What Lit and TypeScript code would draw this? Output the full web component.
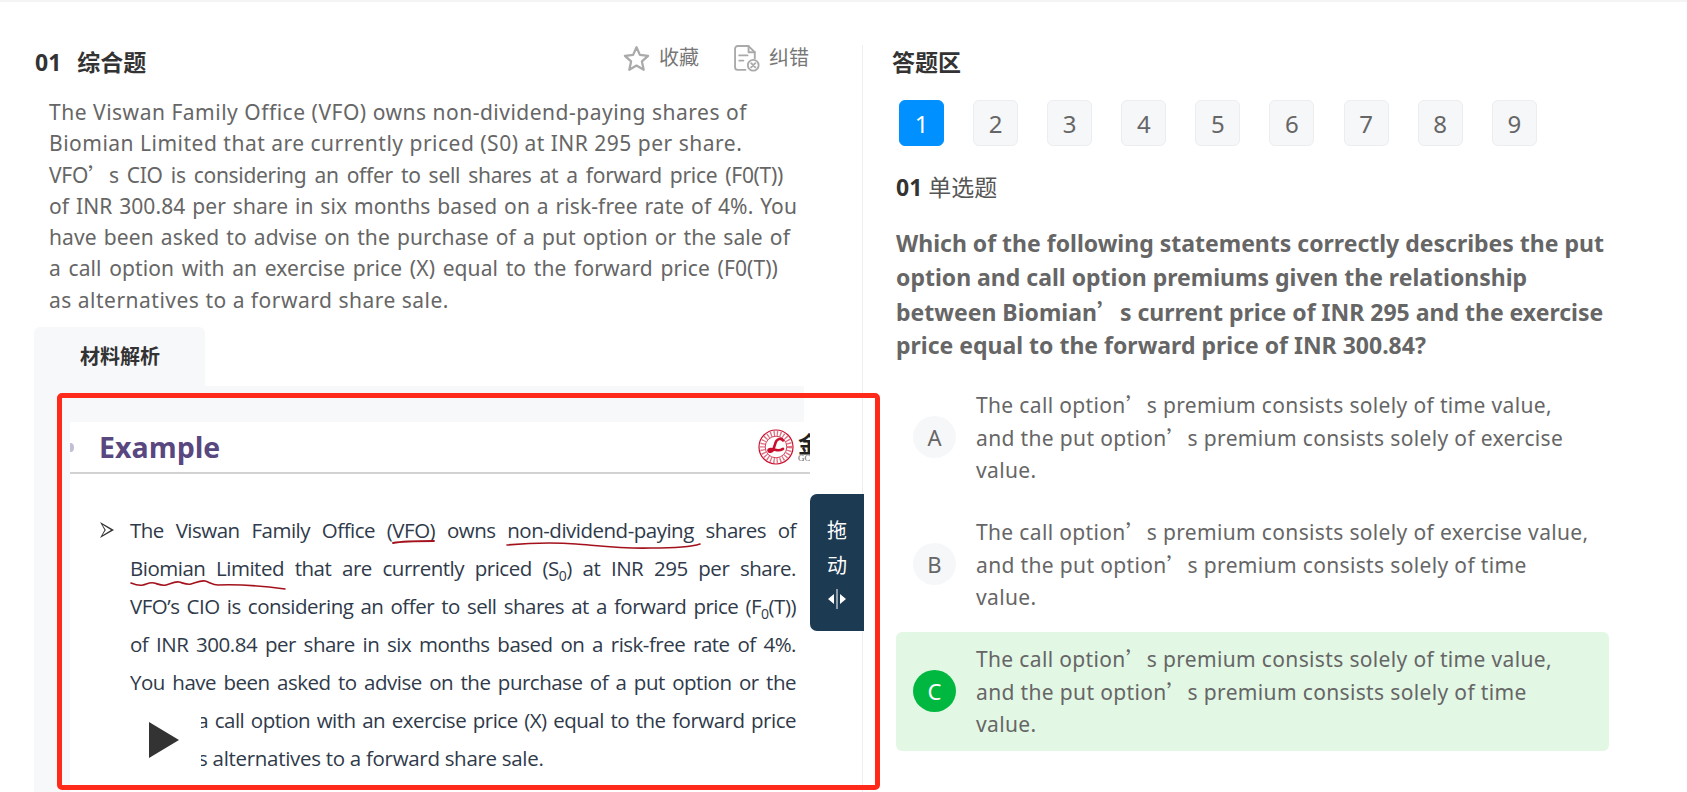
import { LitElement, html, css } from "lit";
import { customElement } from "lit/decorators.js";

const apos = html`<span class="ap">’</span>`;

const passageLines = [
  { w: 698, ls: 0.5, t: html`The Viswan Family Office (VFO) owns non-dividend-paying shares of` },
  { w: 683, ls: 0.5, t: html`Biomian Limited that are currently priced (S0) at INR 295 per share.` },
  { w: 734, ls: -0.3, t: html`VFO${apos}s CIO is considering an offer to sell shares at a forward price (F0(T))` },
  { w: 748, ls: 0.1, t: html`of INR 300.84 per share in six months based on a risk-free rate of 4%. You` },
  { w: 741, ls: 0.1, t: html`have been asked to advise on the purchase of a put option or the sale of` },
  { w: 729, ls: 0.1, t: html`a call option with an exercise price (X) equal to the forward price (F0(T))` },
  { w: 390, ls: 0.5, t: html`as alternatives to a forward share sale.` },
];

const sheetLines = [
  { ls: -0.5, t: html`The Viswan Family Office (VFO) owns non-dividend-paying shares of` },
  { ls: -0.5, t: html`Biomian Limited that are currently priced (S<sub>0</sub>) at INR 295 per share.` },
  { ls: -0.5, t: html`VFO’s CIO is considering an offer to sell shares at a forward price (F<sub>0</sub>(T))` },
  { ls: -0.5, t: html`of INR 300.84 per share in six months based on a risk-free rate of 4%.` },
  { ls: -0.5, t: html`You have been asked to advise on the purchase of a put option or the` },
  { ls: -0.5, t: html`sale of a call option with an exercise price (X) equal to the forward price` },
  { ls: -0.3, t: html`(F<sub>0</sub>(T)) as alternatives to a forward share sale.` },
];

@customElement("app-root")
export class AppRoot extends LitElement {
  static styles = css`
    :host { display: block; width: 1687px; height: 792px; overflow: hidden; position: relative; background: #fff;
      font-family: "Noto Sans", "Noto Sans CJK SC", sans-serif; color: #666; }
    .ap { font-family: "Noto Sans CJK SC", sans-serif; display: inline-block; width: 1em; text-align: left; }
    .nb { white-space: nowrap; }
    .topbar { height: 2px; background: #f4f4f4; }
    .page { display: flex; align-items: flex-start; height: 790px; }
    .left { position: relative; flex: none; width: 862px; box-sizing: border-box; padding: 43px 0 0 34px; }
    .head { display: flex; justify-content: space-between; align-items: flex-start; padding-right: 53px; }
    .title { margin-left: 1px; font-size: 23px; font-weight: 700; line-height: 34px; color: #333; }
    .title span { margin-left: 16px; }
    .actions { display: flex; gap: 35px; height: 26px; font-size: 20px; line-height: 26px; color: #777; }
    .act { display: flex; align-items: center; gap: 9px; }
    .passage { margin: 17.5px 0 0; padding-left: 15px; font-size: 21px; line-height: 31.4px; color: #666; }
    .pline { white-space: nowrap; text-align: justify; text-align-last: justify; height: 31.4px; }
    .tab { margin-top: 10.7px; width: 171px; height: 59px; box-sizing: border-box; padding-left: 46px; background: #f7f8fa;
      border-radius: 6px 6px 0 0; font-size: 20px; font-weight: 700; line-height: 60px; color: #333; }
    .panel { width: 770px; height: 420px; box-sizing: border-box; padding: 36px 0 0 36px; background: #f7f8fa; }
    .sheet { position: relative; width: 740px; height: 380px; background: #fff; overflow: hidden; }
    .sheet-head { position: relative; height: 50px; border-bottom: 2px solid #d2d2d2; display: flex; align-items: center; justify-content: space-between; padding-left: 29px; }
    .example { font-family: "Open Sans", sans-serif; font-weight: 700; font-size: 28.5px; color: #58487f; }
    .dot { position: absolute; left: -3px; top: 21px; width: 7px; height: 9px; border-radius: 50%; background: #c3bdd6; }
    .logo { display: flex; align-items: center; gap: 4px; margin-right: -10px; width: 62px; flex: none; }
    .logo svg { flex: none; }
    .brand { display: flex; flex-direction: column; line-height: 1; }
    .jin { font-family: "Noto Sans CJK SC", sans-serif; font-weight: 700; font-size: 22px; color: #222; line-height: 24px; }
    .gc { font-family: "Liberation Serif", serif; font-size: 9px; color: #666; }
    .body { display: flex; padding: 37px 14px 0 30px; }
    .arrow { flex: none; width: 30px; height: 38px; display: flex; align-items: center; }
    .lines { flex: 1; min-width: 0; font-family: "Open Sans", sans-serif; font-size: 20.5px; line-height: 38px; height: 266px; color: #2f3a4a; }
    .line { text-align: justify; text-align-last: justify; white-space: nowrap; height: 38px; }
    .line:last-child { text-align-last: left; }
    sub { font-size: 14px; line-height: 0; }
    .marks { position: absolute; left: 0; top: 0; width: 740px; height: 380px; pointer-events: none; }
    .cover { position: absolute; left: 0; top: 276px; width: 131px; height: 80px; background: #fff; display: flex; padding: 24px 0 0 79px; box-sizing: border-box; }
    .cover svg { flex: none; }
    .handle { position: absolute; left: 810px; top: 492px; width: 54px; height: 137px; box-sizing: border-box; padding-top: 18px;
      background: #1c3a52; border-radius: 7px 0 0 7px; color: #fff; display: flex; flex-direction: column; align-items: center;
      font-size: 20px; line-height: 35px; font-family: "Noto Sans CJK SC", sans-serif; }
    .handle svg { margin-top: 7px; }
    .right { flex: none; width: 825px; height: 747px; margin-top: 43px; box-sizing: border-box; padding-left: 29px; border-left: 1px solid #eee; }
    .r-title { font-size: 23px; font-weight: 700; line-height: 34px; color: #333; }
    .nums { display: flex; gap: 29.1px; margin: 21px 0 0 7px; }
    .num { width: 45px; height: 46px; box-sizing: border-box; border: 1px solid #ebedf0; border-radius: 6px; background: #f6f7f9;
      display: flex; align-items: center; justify-content: center; font-size: 24px; color: #666; }
    .num.on { background: #0090ff; border-color: #0090ff; color: #fff; }
    .stype { margin: 26px 0 0 4px; font-size: 23px; line-height: 30px; color: #555; }
    .stype b { color: #333; }
    .q { margin: 25px 0 0 4px; width: 725px; font-size: 23px; font-weight: 700; line-height: 33.8px; color: #666; }
    .opts { margin: 15px 0 0 4px; width: 713px; display: flex; flex-direction: column; gap: 8px; }
    .opt { display: flex; align-items: flex-start; gap: 20px; box-sizing: border-box; height: 119px; padding: 10px 0 0 17px; border-radius: 6px; }
    .opt.ok { background: #e3f7e5; }
    .letter { flex: none; margin-top: 28px; width: 43px; height: 42px; border-radius: 50%; background: #f6f7f9; display: flex; align-items: center; justify-content: center; font-size: 22px; color: #666; }
    .ok .letter { background: #00b83f; color: #fff; }
    .txt { width: 614px; font-size: 21px; letter-spacing: .35px; line-height: 32px; color: #666; }
    .red { position: absolute; left: 57px; top: 393px; width: 823px; height: 397px; box-sizing: border-box; border: 5px solid #ff2a1a; border-radius: 5px; pointer-events: none; }
  `;

  render() {
    const options = [
      ["A", html`The call <span class="nb">option${apos}s</span> premium consists solely of time value, and the put <span class="nb">option${apos}s</span> premium consists solely of exercise value.`, false],
      ["B", html`The call <span class="nb">option${apos}s</span> premium consists solely of exercise value, and the put <span class="nb">option${apos}s</span> premium consists solely of time value.`, false],
      ["C", html`The call <span class="nb">option${apos}s</span> premium consists solely of time value, and the put <span class="nb">option${apos}s</span> premium consists solely of time value.`, true],
    ];
    return html`
      <div class="topbar"></div>
      <div class="page">
        <section class="left">
          <div class="head">
            <div class="title">01<span>综合题</span></div>
            <div class="actions">
              <div class="act">
                <svg width="27" height="27" viewBox="0 0 24 24" fill="none" stroke="#aaa" stroke-width="2" stroke-linejoin="round"><path d="M12 2l3 6.800 7.300.8-5.500 5 1.600 7.400L12 18.300l-6.400 3.700 1.600-7.400-5.500-5 7.300-.8z"/></svg>
                收藏
              </div>
              <div class="act">
                <svg width="26" height="27" viewBox="0 0 25 26" fill="none" stroke="#aaa" stroke-width="1.8" stroke-linejoin="round" stroke-linecap="round"><path d="M11 24H3.500A2.500 2.500 0 0 1 1 21.500v-18A2.500 2.500 0 0 1 3.500 1H14l6 6v6"/><path d="M14 1v6h6"/><path d="M5 10h8M5 15h4"/><circle cx="18.500" cy="19.500" r="5.200"/><path d="M16.500 17.500l4 4M20.500 17.500l-4 4"/></svg>
                纠错
              </div>
            </div>
          </div>
          <div class="passage">
            ${passageLines.map((l) => html`<div class="pline" style="width:${l.w}px;letter-spacing:${l.ls}px">${l.t}</div>`)}
          </div>
          <div class="tab">材料解析</div>
          <div class="panel">
            <div class="sheet">
              <div class="sheet-head">
                <i class="dot"></i>
                <span class="example">Example</span>
                <div class="logo">
                  <svg width="36" height="36" viewBox="0 0 36 36" fill="none"><circle cx="18" cy="18" r="17" stroke="#c8102e" stroke-width="1.200"/><circle cx="18" cy="18" r="13.500" stroke="#c8102e" stroke-width="5" stroke-dasharray="1.300 1.900" opacity=".6"/><circle cx="18" cy="18" r="10.800" fill="#fff" stroke="#c8102e" stroke-width=".8"/><path d="M25 11.500c-2-3-6.500-1.500-7.500 2.500l-2 6c-1 3-5 3.500-5 1.500s4-1.500 6.500-.7 5 1 8-1" stroke="#c8102e" stroke-width="2.600" stroke-linecap="round"/></svg>
                  <div class="brand"><span class="jin">金</span><span class="gc">GC</span></div>
                </div>
              </div>
              <div class="body">
                <div class="arrow"><svg width="14" height="16" viewBox="0 0 14 16" fill="#333"><path d="M0 0l14 8L0 16l4.500-8zM2.400 2.800L5.800 8l-3.400 5.200L11 8z" fill-rule="evenodd"/></svg></div>
                <div class="lines">${sheetLines.map((l) => html`<div class="line" style="letter-spacing:${l.ls}px">${l.t}</div>`)}</div>
              </div>
              <svg class="marks" viewBox="0 0 740 380" fill="none" stroke="#a3121c" stroke-linecap="round">
                <path d="M323 121c10-2 28-2 41-2" stroke-width="1.800"/>
                <path d="M437 123c22-2 44-3 69-1 25 2 50 5 75 4 20 0 40-1 49-4" stroke-width="1.600"/>
                <path d="M61 161c5 2 8 3 12 2s7-3 11-2 8 3 12 2 9-4 13-3 8 3 12 2 10-4 14-3 8 4 13 4c25-1 45 1 67 4" stroke-width="1.600"/>
              </svg>
              <div class="cover"><svg width="30" height="36" viewBox="0 0 30 36" fill="#333"><path d="M0 0l30 18L0 36z"/></svg></div>
            </div>
          </div>
          <div class="handle">
            <span>拖</span><span>动</span>
            <svg width="18" height="20" viewBox="0 0 18 20" fill="#fff"><path d="M8.500 0h1v20h-1zM6 5v10L0 10zM12 5v10l6-5z"/></svg>
          </div>
        </section>
        <section class="right">
          <div class="r-title">答题区</div>
          <div class="nums">
            ${[1, 2, 3, 4, 5, 6, 7, 8, 9].map((n) => html`<div class="num ${n === 1 ? "on" : ""}">${n}</div>`)}
          </div>
          <div class="stype"><b>01</b> 单选题</div>
          <div class="q">Which of the following statements correctly describes the put option and call option premiums given the relationship between <span class="nb">Biomian${apos}s</span> current price of INR 295 and the exercise price equal to the forward price of INR 300.84?</div>
          <div class="opts">
            ${options.map(([l, t, ok]) => html`
              <div class="opt ${ok ? "ok" : ""}"><div class="letter">${l}</div><div class="txt">${t}</div></div>`)}
          </div>
        </section>
      </div>
      <div class="red"></div>
    `;
  }
}
